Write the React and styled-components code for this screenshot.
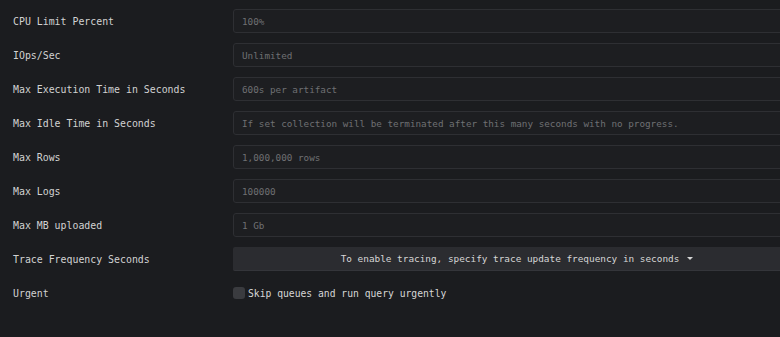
import styled, { createGlobalStyle } from 'styled-components';

const GlobalStyle = createGlobalStyle`
    html, body {
        margin: 0;
        padding: 0;
        background: #1b1c1f;
        overflow: hidden;
    }
`;

const fields = [
    { label: 'CPU Limit Percent', placeholder: '100%' },
    { label: 'IOps/Sec', placeholder: 'Unlimited' },
    { label: 'Max Execution Time in Seconds', placeholder: '600s per artifact' },
    { label: 'Max Idle Time in Seconds', placeholder: 'If set collection will be terminated after this many seconds with no progress.' },
    { label: 'Max Rows', placeholder: '1,000,000 rows' },
    { label: 'Max Logs', placeholder: '100000' },
    { label: 'Max MB uploaded', placeholder: '1 Gb' },
];

export default function App() {
    return (
        <>
            <GlobalStyle />
            <Form>
                {fields.map((f) => (
                    <Row key={f.label}>
                        <Label>{f.label}</Label>
                        <Input placeholder={f.placeholder} />
                    </Row>
                ))}
                <Row>
                    <Label>Trace Frequency Seconds</Label>
                    <DropButton>
                        To enable tracing, specify trace update frequency in seconds
                        <Caret />
                    </DropButton>
                </Row>
                <Row>
                    <Label>Urgent</Label>
                    <CheckLabel>
                        <Box />
                        Skip queues and run query urgently
                    </CheckLabel>
                </Row>
            </Form>
        </>
    );
}

const Form = styled.div`
    width: 801px;
    padding-top: 9px;
    display: flex;
    flex-direction: column;
    gap: 10px;
    font-family: "DejaVu Sans Mono", "Liberation Mono", monospace;
    font-size: 9.9px;
`;

const Row = styled.div`
    display: grid;
    grid-template-columns: 233px 1fr;
    align-items: center;
    height: 24px;
`;

const Label = styled.div`
    padding-left: 13px;
    color: #d2d2d2;
`;

const Input = styled.input`
    box-sizing: border-box;
    height: 24px;
    width: 100%;
    padding: 0 8px;
    background: #1d1e21;
    border: 1px solid #2e2f33;
    border-radius: 3px;
    font-family: inherit;
    font-size: 9.3px;
    color: #cfcfcf;
    outline: none;

    &::placeholder {
        color: #6f7073;
    }
`;

const DropButton = styled.button`
    box-sizing: border-box;
    height: 24px;
    width: 100%;
    display: flex;
    align-items: center;
    justify-content: center;
    gap: 8px;
    background: #2b2c30;
    border: none;
    border-bottom: 1px solid #34353a;
    border-radius: 2px;
    font-family: inherit;
    font-size: 9.4px;
    color: #d6d6d6;
`;

const Caret = styled.span`
    width: 0;
    height: 0;
    border-left: 3px solid transparent;
    border-right: 3px solid transparent;
    border-top: 3px solid #d6d6d6;
`;

const CheckLabel = styled.label`
    display: flex;
    align-items: center;
    gap: 3px;
    font-size: 9.7px;
    color: #d6d6d6;
`;

const Box = styled.span`
    width: 12px;
    height: 12px;
    border-radius: 3px;
    background: #3a3b3f;
`;
